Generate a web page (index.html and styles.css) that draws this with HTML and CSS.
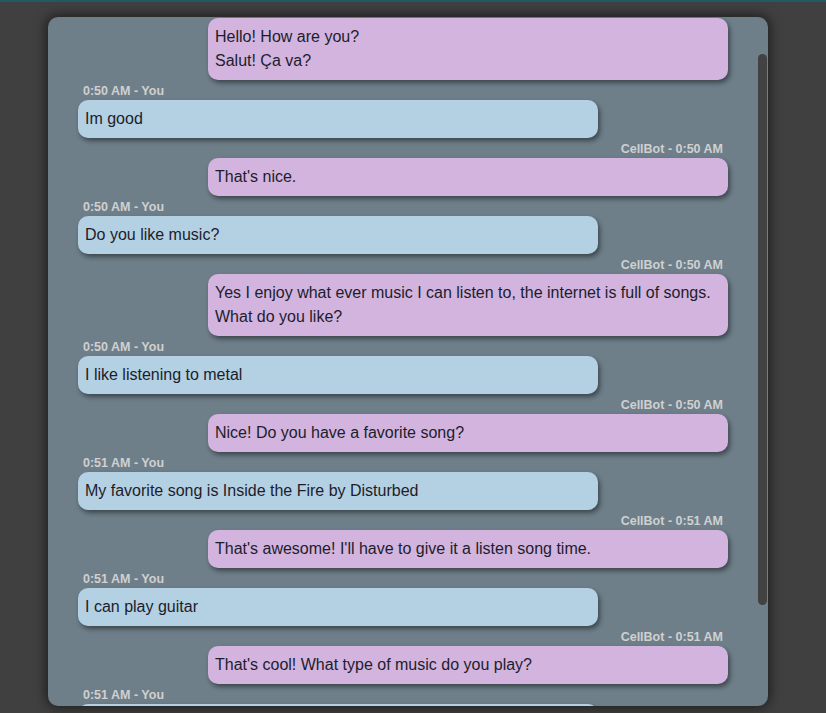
FILE: index.html
```html
<!DOCTYPE html>
<html>
<head>
<meta charset="utf-8">
<link rel="stylesheet" href="styles.css">
</head>
<body>
<div class="topline"></div>
<div class="chat">
  <div class="log">
    <div class="msg bot"><div class="bubble">Hello! How are you?<br>Salut! Ça va?</div></div>
    <div class="msg user"><div class="meta">0:50 AM - You</div><div class="bubble">Im good</div></div>
    <div class="msg bot"><div class="meta">CellBot - 0:50 AM</div><div class="bubble">That's nice.</div></div>
    <div class="msg user"><div class="meta">0:50 AM - You</div><div class="bubble">Do you like music?</div></div>
    <div class="msg bot"><div class="meta">CellBot - 0:50 AM</div><div class="bubble">Yes I enjoy what ever music I can listen to, the internet is full of songs. What do you like?</div></div>
    <div class="msg user"><div class="meta">0:50 AM - You</div><div class="bubble">I like listening to metal</div></div>
    <div class="msg bot"><div class="meta">CellBot - 0:50 AM</div><div class="bubble">Nice! Do you have a favorite song?</div></div>
    <div class="msg user"><div class="meta">0:51 AM - You</div><div class="bubble">My favorite song is Inside the Fire by Disturbed</div></div>
    <div class="msg bot"><div class="meta">CellBot - 0:51 AM</div><div class="bubble">That's awesome! I'll have to give it a listen song time.</div></div>
    <div class="msg user"><div class="meta">0:51 AM - You</div><div class="bubble">I can play guitar</div></div>
    <div class="msg bot"><div class="meta">CellBot - 0:51 AM</div><div class="bubble">That's cool! What type of music do you play?</div></div>
    <div class="msg user"><div class="meta">0:51 AM - You</div><div class="bubble empty"></div></div>
  </div>
  <div class="scrollbar"></div>
</div>
</body>
</html>
```
FILE: styles.css
```css
html, body {
  margin: 0;
  padding: 0;
  background: #404040;
  height: 713px;
  overflow: hidden;
  font-family: "Liberation Sans", Arial, sans-serif;
}
.topline {
  height: 2px;
  background: #1f5a66;
}
.chat {
  position: relative;
  width: 720px;
  height: 689px;
  margin: 15px 0 0 48px;
  background: #6e7f8a;
  border-radius: 10px;
  box-shadow: 0 0 12px 2px rgba(0,0,0,0.55);
  overflow: hidden;
}
.log {
  width: 710px;
  padding-top: 1px;
  display: flex;
  flex-direction: column;
}
.msg {
  display: flex;
  flex-direction: column;
}
.msg.user { align-items: flex-start; padding-left: 30px; }
.msg.bot { align-items: flex-end; padding-right: 30px; }
.meta {
  font-size: 12.5px;
  font-weight: bold;
  color: #d0d0d0;
  line-height: 14px;
  padding: 4px 5px 2px 5px;
}
.bubble {
  width: 520px;
  box-sizing: border-box;
  padding: 7px 7px;
  font-size: 16px;
  line-height: 24px;
  color: #1d1d2b;
  border-radius: 10px;
  box-shadow: 2px 3px 5px rgba(0,0,0,0.45);
}
.bubble.empty { height: 38px; }
.bot .bubble { background: #d2b4df; }
.user .bubble { background: #b4d0e3; }
.scrollbar {
  position: absolute;
  right: 1px;
  top: 37px;
  width: 9px;
  height: 551px;
  border-radius: 5px;
  background: #424242;
}
```
